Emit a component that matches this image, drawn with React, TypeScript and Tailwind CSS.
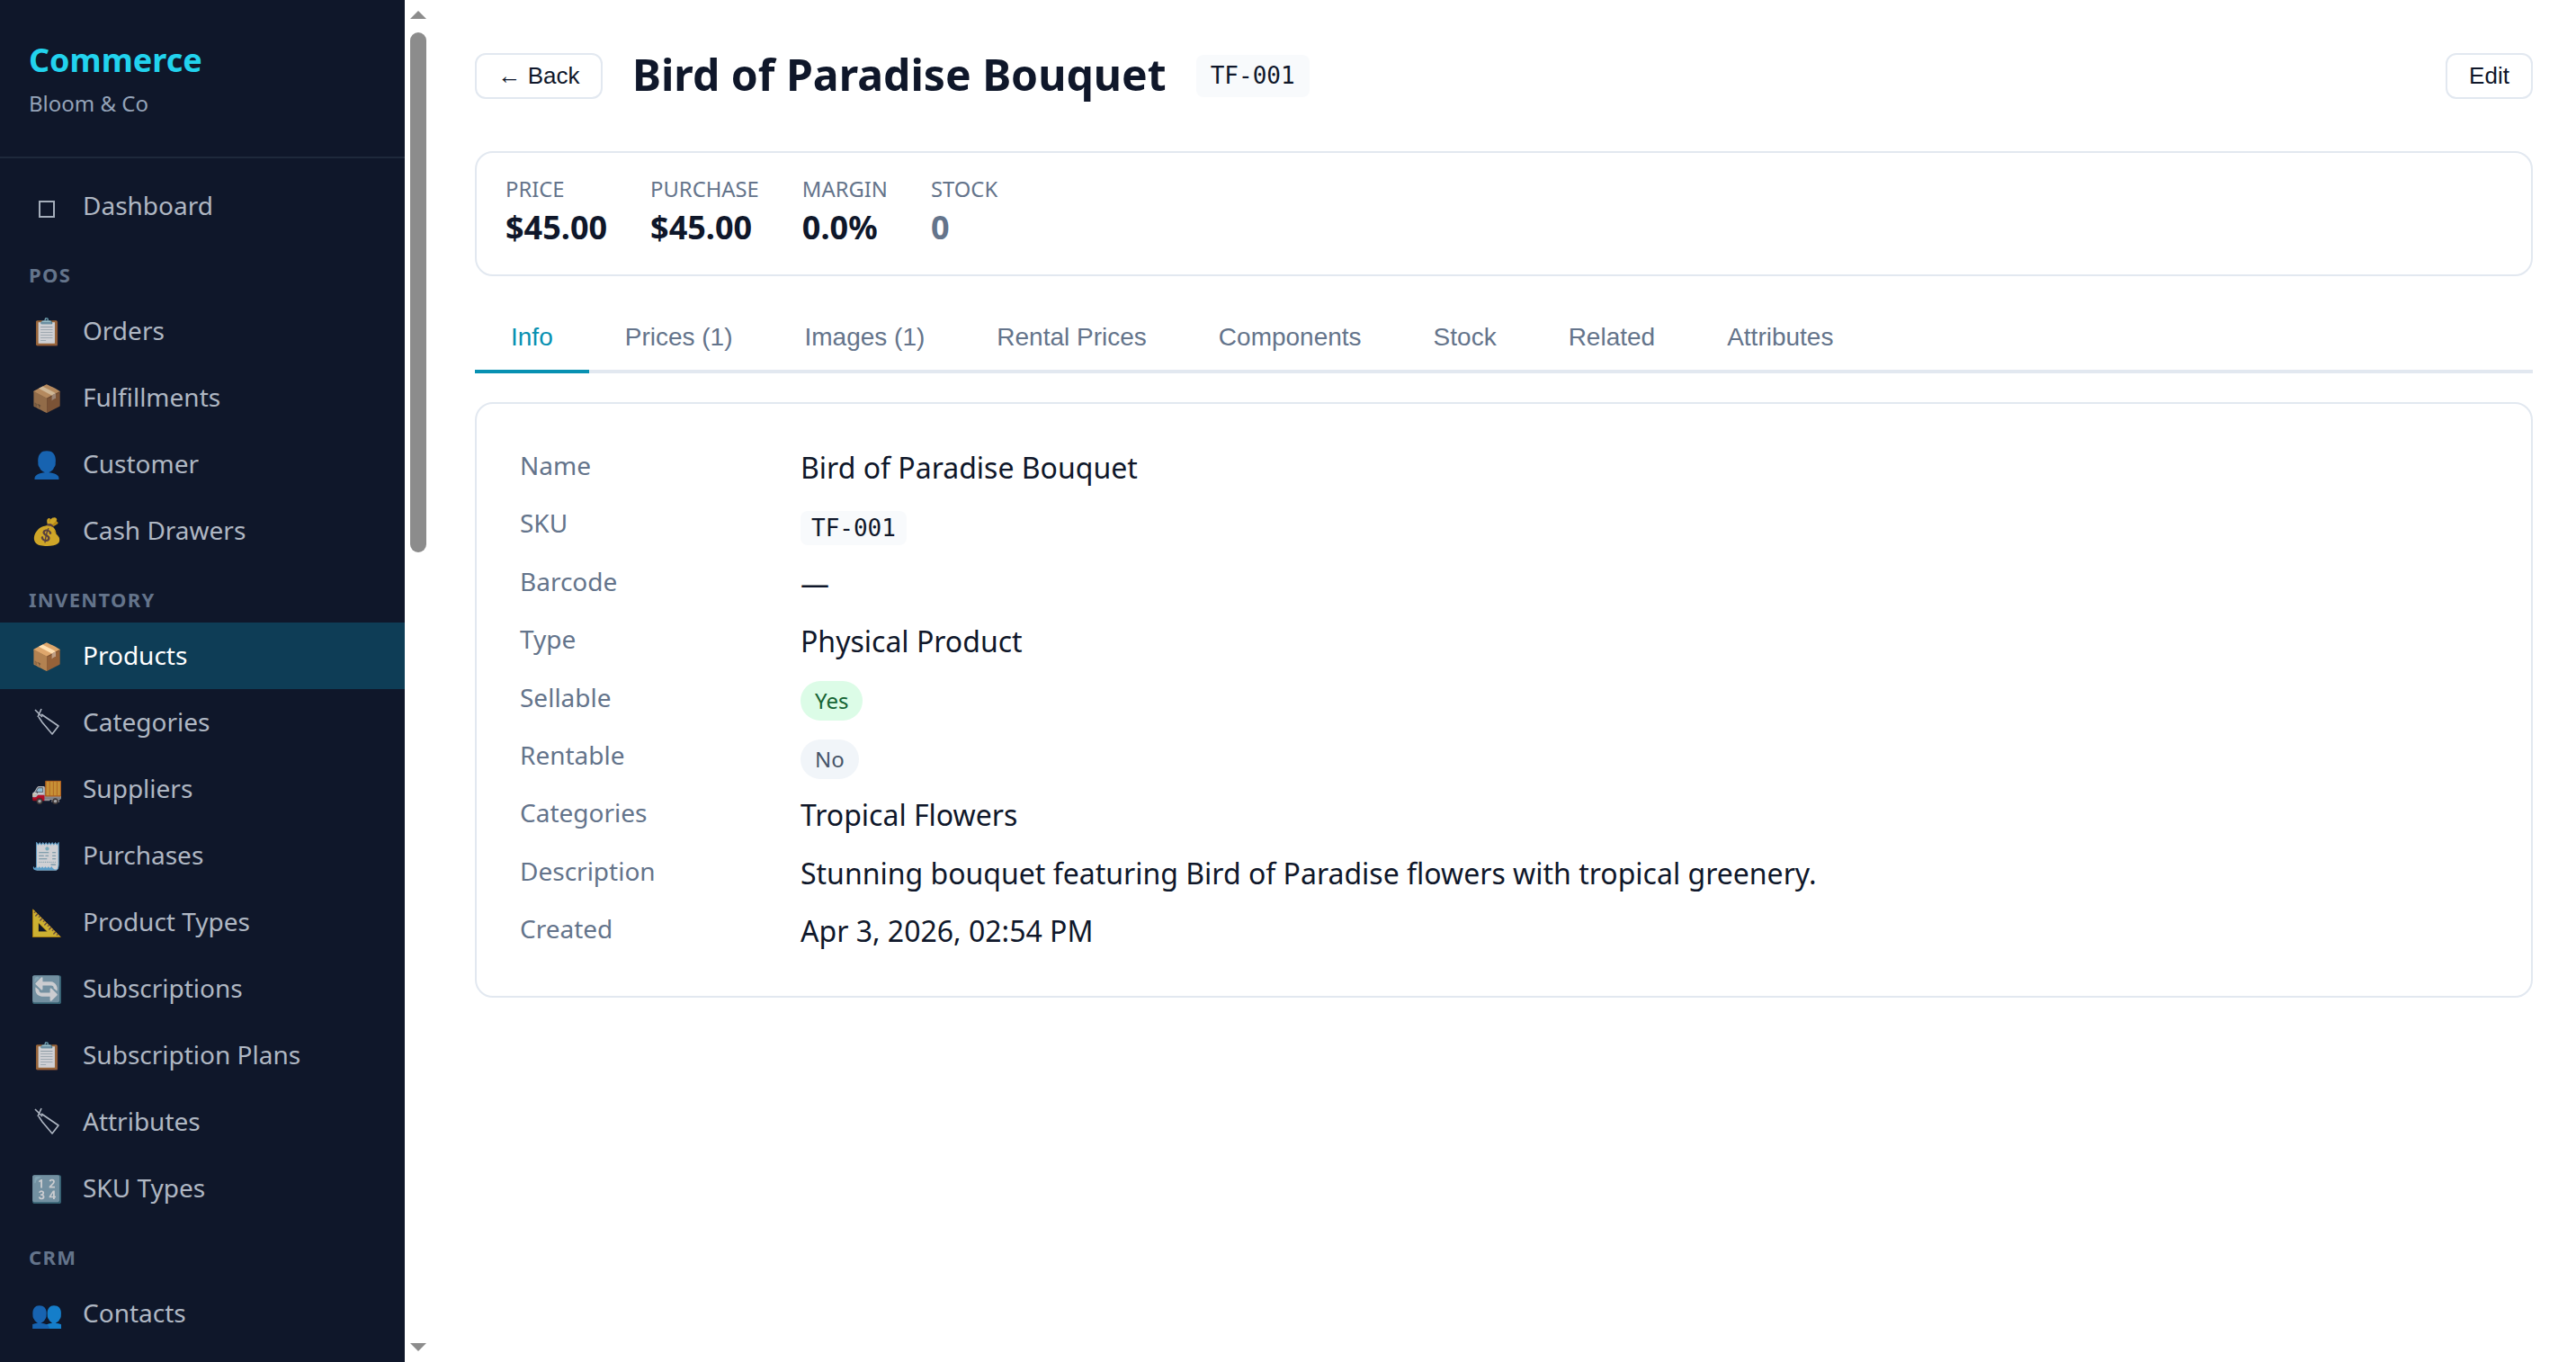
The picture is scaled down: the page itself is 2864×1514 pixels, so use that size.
const sans = "font-['Noto_Sans',sans-serif]";
const mono = "font-['DejaVu_Sans_Mono',monospace]";

type NavItem = { icon: string; label: string; active?: boolean };
type NavGroup = { title?: string; items: NavItem[] };

const groups: NavGroup[] = [
  { items: [{ icon: "square", label: "Dashboard" }] },
  {
    title: "POS",
    items: [
      { icon: "📋", label: "Orders" },
      { icon: "📦", label: "Fulfillments" },
      { icon: "👤", label: "Customer" },
      { icon: "💰", label: "Cash Drawers" },
    ],
  },
  {
    title: "Inventory",
    items: [
      { icon: "📦", label: "Products", active: true },
      { icon: "tag", label: "Categories" },
      { icon: "🚚", label: "Suppliers" },
      { icon: "🧾", label: "Purchases" },
      { icon: "📐", label: "Product Types" },
      { icon: "🔄", label: "Subscriptions" },
      { icon: "📋", label: "Subscription Plans" },
      { icon: "tag", label: "Attributes" },
      { icon: "🔢", label: "SKU Types" },
    ],
  },
  { title: "CRM", items: [{ icon: "👥", label: "Contacts" }] },
];

const tabs = ["Info", "Prices (1)", "Images (1)", "Rental Prices", "Components", "Stock", "Related", "Attributes"];

const stats = [
  { label: "Price", value: "$45.00", color: "text-[#0f172a]" },
  { label: "Purchase", value: "$45.00", color: "text-[#0f172a]" },
  { label: "Margin", value: "0.0%", color: "text-[#0f172a]" },
  { label: "Stock", value: "0", color: "text-[#64748b]" },
];

function TagIcon() {
  return (
    <svg className="block mx-[-2px]" width="44" height="44" viewBox="0 0 44 44" fill="none" stroke="#afb7c3" strokeWidth="1.6">
      <path d="M16 14L35 27L28 36L17 23L13 17" strokeLinejoin="round" />
      <path d="M9 9L17 17M16 8L12 17" />
    </svg>
  );
}

function NavIcon({ item }: { item: NavItem }) {
  if (item.icon === "tag") return <span className="w-[40px] mr-5"><TagIcon /></span>;
  if (item.icon === "square")
    return (
      <span className="w-[40px] mr-5 flex justify-center">
        <span className="block w-[18px] h-[19px] mt-[9px] border-2 border-[#a4adba]" />
      </span>
    );
  return (
    <span className={`w-[40px] mr-5 text-center text-[29px] leading-none ${item.active ? "" : "opacity-80"}`}>
      {item.icon}
    </span>
  );
}

function Sidebar() {
  return (
    <aside className={`w-[450px] h-full shrink-0 overflow-hidden bg-[#0f172a] ${sans}`}>
      <div className="h-[176px] border-b-2 border-[#1e293b] px-8 pt-[42px]">
        <div className="text-[36px] leading-[50px] font-bold text-[#22d3ee]">Commerce</div>
        <div className="text-[24px] leading-[34px] mt-[6px] text-[#94a3b8]">Bloom &amp; Co</div>
      </div>
      <nav className="pt-4">
        {groups.map((group, i) => (
          <div key={i}>
            {group.title && (
              <div className="h-[65px] pt-[25px] px-8 text-[22px] leading-[28px] font-bold uppercase tracking-[1.3px] text-[#64748b]">
                {group.title}
              </div>
            )}
            {group.items.map((item) => (
              <div
                key={item.label}
                className={`flex items-center h-[74px] px-8 pb-[2px] text-[28px] ${
                  item.active ? "bg-[#0e3d56] text-white" : "text-[#afb7c3]"
                }`}
              >
                <NavIcon item={item} />
                {item.label}
              </div>
            ))}
          </div>
        ))}
      </nav>
    </aside>
  );
}

function Scrollbar() {
  return (
    <div className="w-[30px] h-full shrink-0 flex flex-col items-center bg-white">
      <svg className="mt-3 shrink-0" width="18" height="9" viewBox="0 0 18 9">
        <path d="M9 0L18 9H0z" fill="#8c8c8c" />
      </svg>
      <div className="mt-[15px] w-[18px] h-[578px] rounded-full bg-[#8c8c8c]" />
      <div className="flex-1" />
      <svg className="mb-3 shrink-0" width="18" height="9" viewBox="0 0 18 9">
        <path d="M0 0H18L9 9z" fill="#8c8c8c" />
      </svg>
    </div>
  );
}

function Row({ label, children }: { label: string; children: React.ReactNode }) {
  return (
    <div className="flex h-[64.4px] items-start">
      <div className="w-[312px] shrink-0 text-[28px] leading-[44px] text-[#64748b]">{label}</div>
      <div className="text-[32px] leading-[50px] text-[#0f172a]">{children}</div>
    </div>
  );
}

export default function App() {
  return (
    <div className={`flex w-[2864px] h-[1514px] overflow-hidden bg-white ${sans}`}>
      <Sidebar />
      <Scrollbar />
      <main className="flex-1 min-w-0 px-12 pt-[59px]">
        <div className="flex items-center h-[51px]">
          <button className="h-[51px] w-[142px] rounded-xl border-2 border-[#e2e8f0] bg-white font-['Liberation_Sans',sans-serif] text-[26px] text-[#0f172a]">
            ← Back
          </button>
          <h1 className="ml-[33px] -mt-[2px] text-[48.1px] font-bold text-[#0f172a] leading-none">Bird of Paradise Bouquet</h1>
          <code className={`ml-[33px] h-[47px] px-4 rounded-lg bg-[#f8fafc] ${mono} text-[26px] leading-[47px] text-[#0f172a]`}>
            TF-001
          </code>
          <button className="ml-auto h-[51px] w-[97px] rounded-xl border-2 border-[#e2e8f0] bg-white font-['Liberation_Sans',sans-serif] text-[26px] text-[#0f172a]">
            Edit
          </button>
        </div>

        <div className="mt-[58px] h-[139px] rounded-[20px] border-2 border-[#e2e8f0] flex gap-12 px-8 pt-[22px]">
          {stats.map((s) => (
            <div key={s.label}>
              <div className="text-[23.8px] leading-[36px] uppercase text-[#64748b]">{s.label}</div>
              <div className={`text-[36px] leading-[50px] font-bold ${s.color}`}>{s.value}</div>
            </div>
          ))}
        </div>

        <div className="mt-[32px] flex border-b-[4px] border-[#e2e8f0] h-[76px] font-['Liberation_Sans',sans-serif]">
          {tabs.map((t, i) => (
            <div
              key={t}
              className={`h-[76px] px-10 text-[28px] leading-[72px] border-b-[4px] ${
                i === 0 ? "text-[#0891b2] border-[#0891b2]" : "text-[#64748b] border-transparent"
              }`}
            >
              {t}
            </div>
          ))}
        </div>

        <div className="mt-[32px] h-[662px] rounded-[20px] border-2 border-[#e2e8f0] px-12 pt-[46px]">
          <Row label="Name">Bird of Paradise Bouquet</Row>
          <Row label="SKU">
            <code className={`inline-block h-[38px] px-3 rounded-lg bg-[#f8fafc] ${mono} text-[26px] leading-[38px] text-[#0f172a]`}>
              TF-001
            </code>
          </Row>
          <Row label="Barcode">—</Row>
          <Row label="Type">Physical Product</Row>
          <Row label="Sellable">
            <span className="inline-block h-[44px] -translate-y-[2px] px-4 rounded-full bg-[#dcfce7] text-[24px] leading-[44px] text-[#166534]">Yes</span>
          </Row>
          <Row label="Rentable">
            <span className="inline-block h-[44px] -translate-y-[1px] px-4 rounded-full bg-[#f1f5f9] text-[24px] leading-[44px] text-[#475569]">No</span>
          </Row>
          <Row label="Categories">Tropical Flowers</Row>
          <Row label="Description">Stunning bouquet featuring Bird of Paradise flowers with tropical greenery.</Row>
          <Row label="Created">Apr 3, 2026, 02:54 PM</Row>
        </div>
      </main>
    </div>
  );
}
